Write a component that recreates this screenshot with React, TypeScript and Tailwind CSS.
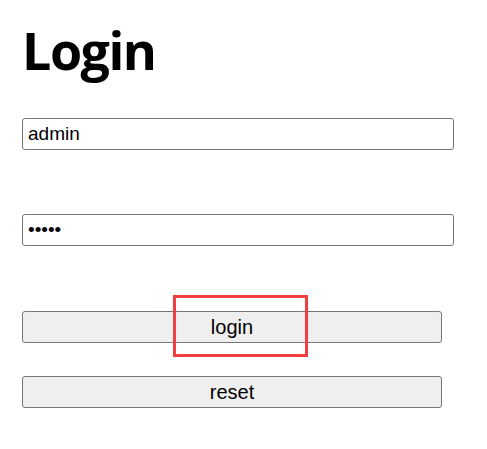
import React from "react";

export default function App() {
  return (
    <div className="relative w-[487px] h-[449px] bg-white pl-[22px] pt-[24px]">
      <h1
        className="text-[52px] font-bold leading-none text-black tracking-[-1.5px]"
        style={{ fontFamily: '"Open Sans", "Noto Sans", sans-serif' }}
      >
        Login
      </h1>
      <div className="mt-[42px] flex flex-col" style={{ fontFamily: '"Liberation Sans", Arial, sans-serif' }}>
        <input
          type="text"
          defaultValue="admin"
          className="w-[432px] h-[32px] border border-[#767676] rounded-[3px] px-[5px] text-[19px] text-black outline-none"
        />
        <input
          type="password"
          defaultValue="admin"
          className="mt-[64px] w-[432px] h-[32px] border border-[#767676] rounded-[3px] px-[5px] text-[19px] text-black outline-none"
        />
        <button className="mt-[65px] w-[420px] h-[32px] bg-[#efefef] border border-[#767676] rounded-[3px] text-[20px] text-black">
          login
        </button>
        <button className="mt-[33px] w-[420px] h-[32px] bg-[#efefef] border border-[#767676] rounded-[3px] text-[20px] text-black">
          reset
        </button>
      </div>
      <div className="absolute left-[173px] top-[295px] w-[135px] h-[62px] border-[3px] border-[#ef3f3f] pointer-events-none" />
    </div>
  );
}
